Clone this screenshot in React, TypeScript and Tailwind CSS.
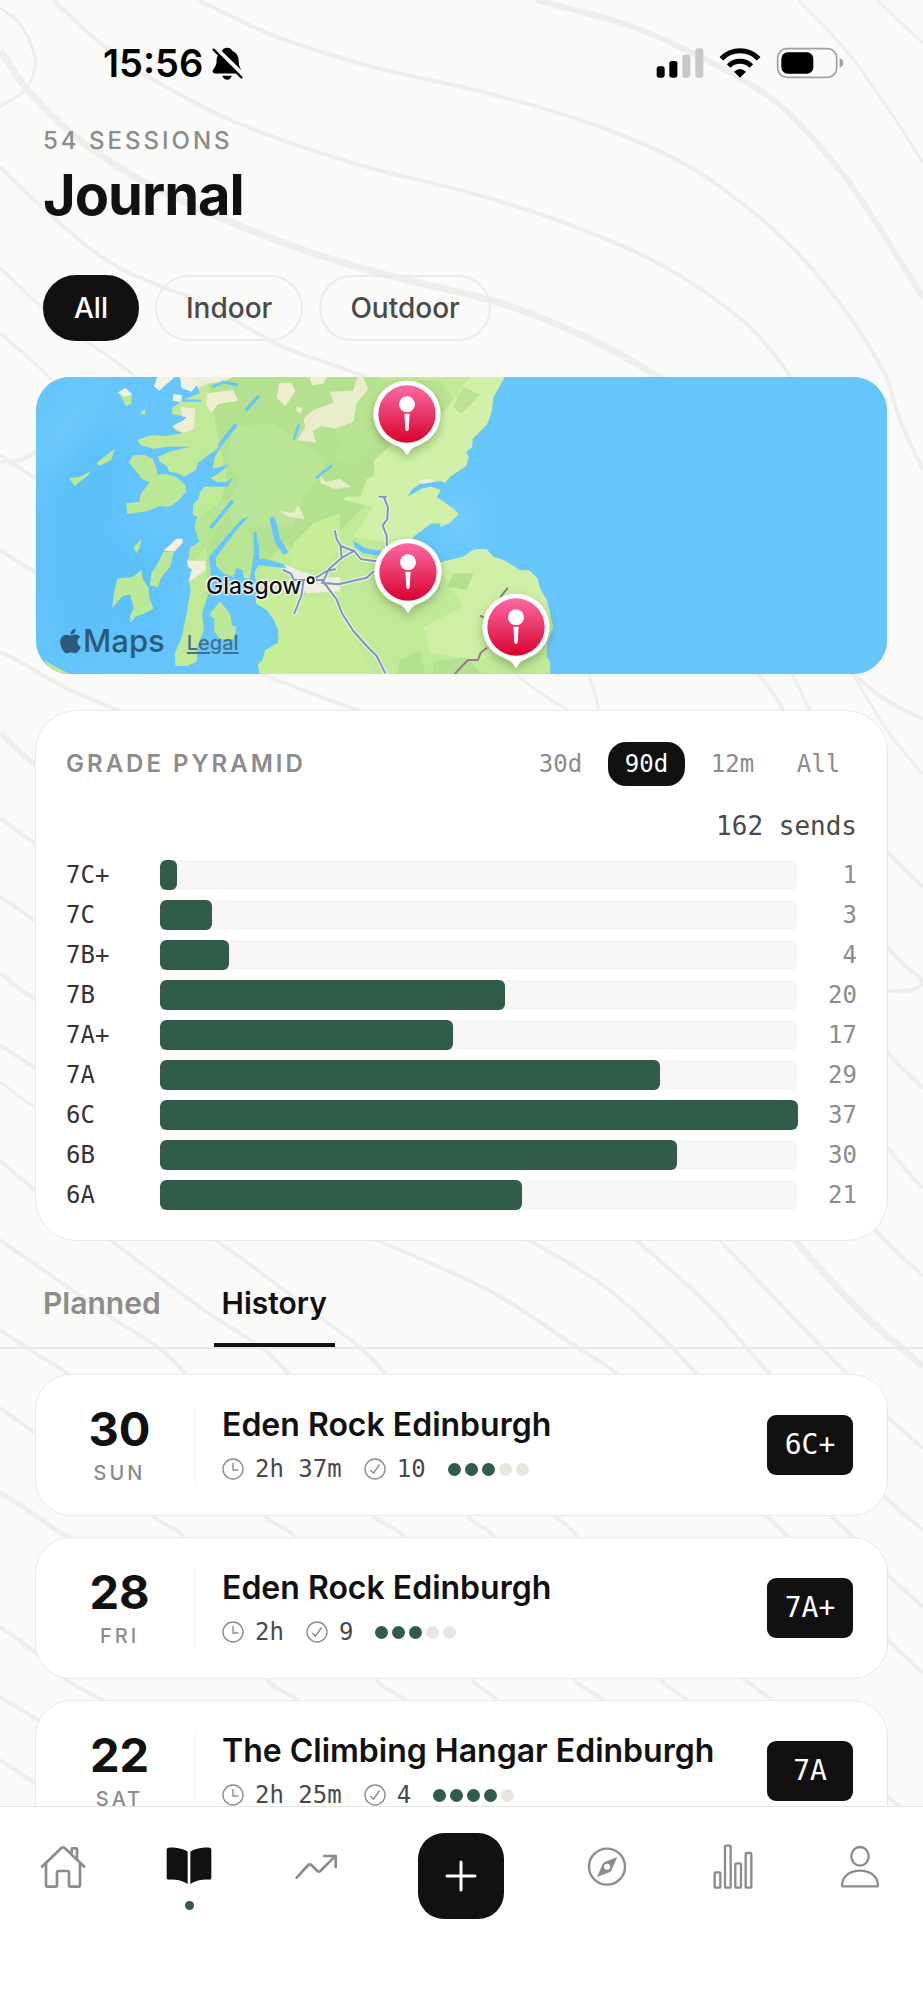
import React, { useState } from 'react';
import { FaApple } from 'react-icons/fa';
import clsx from 'clsx';

type Point = [number, number];

const grades = [
  { grade: '7C+', sends: 1 },
  { grade: '7C', sends: 3 },
  { grade: '7B+', sends: 4 },
  { grade: '7B', sends: 20 },
  { grade: '7A+', sends: 17 },
  { grade: '7A', sends: 29 },
  { grade: '6C', sends: 37 },
  { grade: '6B', sends: 30 },
  { grade: '6A', sends: 21 },
];

const sessions = [
  { day: '30', weekday: 'SUN', place: 'Eden Rock Edinburgh', duration: '2h 37m', sends: 10, effort: 3, top: '6C+' },
  { day: '28', weekday: 'FRI', place: 'Eden Rock Edinburgh', duration: '2h', sends: 9, effort: 3, top: '7A+' },
  { day: '22', weekday: 'SAT', place: 'The Climbing Hangar Edinburgh', duration: '2h 25m', sends: 4, effort: 4, top: '7A' },
];

const contours: { width: number; points: Point[] }[] = [
  { width: 3, points: [[0, 8], [20, 24], [33, 50], [35, 68], [25, 90], [0, 107]] },
  { width: 7, points: [[0, 50], [26, 88], [71, 133], [135, 177], [218, 217], [312, 253], [406, 280], [500, 303], [577, 333], [647, 370], [700, 410]] },
  { width: 4, points: [[53, 0], [100, 43], [159, 83], [235, 122], [353, 163], [471, 193], [565, 223], [665, 267], [742, 320], [786, 370], [800, 400]] },
  { width: 4, points: [[197, 0], [277, 37], [377, 68], [483, 92], [589, 123], [683, 163], [759, 217], [824, 283], [883, 370], [900, 420], [923, 470]] },
  { width: 6, points: [[536, 0], [636, 28], [706, 60], [777, 103], [842, 173], [895, 253], [923, 298]] },
  { width: 3, points: [[798, 0], [848, 53], [889, 110], [923, 163]] },
  { width: 3, points: [[877, 0], [900, 22], [923, 43]] },
  { width: 4, points: [[0, 167], [53, 217], [118, 267], [212, 307], [283, 347], [353, 372], [420, 400]] },
  { width: 3, points: [[0, 268], [53, 317], [130, 372], [160, 400]] },
  { width: 3, points: [[0, 333], [44, 372], [60, 390]] },
  { width: 4, points: [[0, 462], [20, 460], [40, 450]] },
  { width: 4, points: [[0, 455], [20, 468], [45, 485]] },
  { width: 4, points: [[0, 550], [20, 563], [45, 578]] },
  { width: 4, points: [[0, 652], [20, 662], [70, 690], [130, 715]] },
  { width: 4, points: [[240, 665], [321, 697], [370, 715]] },
  { width: 3, points: [[500, 660], [536, 690], [576, 715]] },
  { width: 3, points: [[585, 665], [594, 690], [600, 715]] },
  { width: 4, points: [[745, 660], [771, 690], [786, 715]] },
  { width: 3, points: [[785, 660], [800, 690], [812, 715]] },
  { width: 3, points: [[845, 660], [865, 695], [889, 733], [923, 775]] },
  { width: 4, points: [[850, 672], [886, 700], [923, 719]] },
  { width: 6, points: [[0, 733], [20, 752], [45, 772]] },
  { width: 4, points: [[0, 818], [20, 833], [45, 850]] },
  { width: 4, points: [[0, 897], [20, 910], [45, 928]] },
  { width: 4, points: [[0, 973], [20, 989], [45, 1006]] },
  { width: 4, points: [[0, 1045], [20, 1058], [45, 1075]] },
  { width: 3, points: [[0, 1082], [20, 1097], [45, 1115]] },
  { width: 4, points: [[0, 1160], [20, 1178], [45, 1198]] },
  { width: 4, points: [[880, 845], [905, 870], [923, 887]] },
  { width: 4, points: [[885, 945], [905, 966], [922, 982], [912, 990], [885, 991]] },
  { width: 4, points: [[880, 1045], [900, 1066], [923, 1088]] },
  { width: 4, points: [[880, 1138], [900, 1163], [923, 1188]] },
  { width: 4, points: [[0, 1240], [100, 1310], [182, 1370], [264, 1515], [295, 1537], [377, 1680], [405, 1700], [440, 1740]] },
  { width: 4, points: [[100, 1232], [194, 1303], [285, 1370], [373, 1515], [404, 1537], [473, 1680], [497, 1700], [530, 1740]] },
  { width: 4, points: [[205, 1232], [306, 1307], [382, 1370], [467, 1515], [494, 1537], [573, 1678], [603, 1700], [640, 1740]] },
  { width: 4, points: [[365, 1235], [488, 1290], [577, 1347], [617, 1374], [765, 1515], [788, 1537], [888, 1640], [923, 1673]] },
  { width: 4, points: [[515, 1232], [600, 1283], [665, 1340], [697, 1374], [830, 1515], [853, 1537], [888, 1575], [923, 1607]] },
  { width: 4, points: [[625, 1230], [706, 1303], [770, 1374], [885, 1497], [923, 1530]] },
  { width: 4, points: [[710, 1230], [783, 1307], [847, 1374], [888, 1417], [923, 1448]] },
  { width: 7, points: [[785, 1230], [859, 1310], [923, 1367]] },
  { width: 4, points: [[870, 1225], [895, 1250], [923, 1276]] },
  { width: 4, points: [[0, 1330], [35, 1353], [69, 1376], [153, 1515], [184, 1537], [267, 1680], [297, 1700], [340, 1740]] },
  { width: 4, points: [[530, 1500], [553, 1515], [578, 1537], [660, 1678], [687, 1700], [720, 1730]] },
  { width: 4, points: [[700, 1650], [742, 1678], [772, 1700], [888, 1797], [910, 1815]] },
  { width: 4, points: [[0, 1408], [20, 1422], [45, 1440]] },
  { width: 5, points: [[0, 1492], [35, 1515], [69, 1538], [90, 1550]] },
  { width: 4, points: [[0, 1627], [35, 1652], [67, 1680], [107, 1702]] },
  { width: 4, points: [[0, 1697], [20, 1709], [45, 1724]] },
  { width: 4, points: [[0, 1760], [20, 1773], [45, 1790]] },
];

// Smooth curve through the points. Handles are limited to the straight distance
// to the next point so that uneven spacing does not cause loops.
const toPath = (pts: Point[]) => {
  const handle = (a: Point, b: Point, reach: number) => {
    const dx = b[0] - a[0];
    const dy = b[1] - a[1];
    const len = Math.hypot(dx, dy) || 1;
    return [Math.round((dx / len) * reach), Math.round((dy / len) * reach)];
  };

  let d = `M${pts[0][0]} ${pts[0][1]}`;
  for (let i = 0; i < pts.length - 1; i++) {
    const p1 = pts[i];
    const p2 = pts[i + 1];
    const reach = Math.hypot(p2[0] - p1[0], p2[1] - p1[1]) / 3;
    const h1 = handle(pts[i - 1] || p1, p2, reach);
    const h2 = handle(p1, pts[i + 2] || p2, reach);
    d += `C${p1[0] + h1[0]} ${p1[1] + h1[1]} ${p2[0] - h2[0]} ${p2[1] - h2[1]} ${p2[0]} ${p2[1]}`;
  }
  return d;
};

const Contours = () => (
  <svg
    className="pointer-events-none absolute inset-0 h-full w-full"
    viewBox="0 0 923 2000"
    preserveAspectRatio="xMidYMin slice"
    fill="none"
    stroke="#eeeeec"
    aria-hidden="true"
  >
    {contours.map((line, i) => (
      <path key={i} d={toPath(line.points)} strokeWidth={line.width} />
    ))}
  </svg>
);

const StatusBar = () => (
  <div className="flex h-[126px] items-center justify-between pr-[79px] pl-[103px]">
    <div className="flex items-center gap-2 text-black">
      <span className="text-[38px] leading-[40px] font-semibold">15:56</span>
      <svg width="33" height="35" viewBox="366 46 98 106" aria-label="Silent mode">
        <path d="M414 51c9 0 14 4 16 10 14 6 19 18 19 31 0 18 8 23 8 30q0 7-8 7h-71q-8 0-8-7c1-7 12-14 12-30 0-13 5-25 16-31 2-6 7-10 16-10Z" />
        <path d="M399 136h29q-4 12-14 12t-15-12Z" />
        <path d="M376 52l90 88" stroke="#fafaf8" strokeWidth="17" />
        <path d="M373 57l84 84" stroke="#000" strokeWidth="7" strokeLinecap="round" />
      </svg>
    </div>
    <svg width="188" height="32" viewBox="44 48 564 96" aria-label="Signal, Wi-Fi and battery">
      <rect x="46" y="106" width="24" height="34" rx="7" />
      <rect x="84" y="90" width="24" height="50" rx="7" />
      <rect x="123" y="71" width="24" height="69" rx="7" fill="#c8c8c7" />
      <rect x="162" y="52" width="24" height="88" rx="7" fill="#c8c8c7" />
      <g fill="none" stroke="#000" strokeWidth="15">
        <path d="M240 83a78 78 0 0 1 112 0" />
        <path d="M262 105a48 48 0 0 1 68 0" />
      </g>
      <path d="M296 140l-18-18q18-16 36 0Z" />
      <rect x="409" y="53" width="177" height="86" rx="27" fill="none" stroke="#a0a0a0" strokeWidth="5" />
      <rect x="420" y="64" width="96" height="64" rx="19" />
      <path d="M595 82q11 4 11 14t-11 14Z" fill="#a0a0a0" />
    </svg>
  </div>
);

const FilterChips = () => {
  const [active, setActive] = useState('All');

  return (
    <div className="mt-12 flex gap-4 px-[43px]">
      {['All', 'Indoor', 'Outdoor'].map((name) => (
        <button
          key={name}
          type="button"
          onClick={() => setActive(name)}
          className={clsx(
            'h-[66px] rounded-full border-2 px-[29px] text-[28px] leading-8 font-medium',
            name === active ? 'border-[#111111] bg-[#111111] text-white' : 'border-[#ebebe9] text-[#4a4a4a]'
          )}
        >
          {name}
        </button>
      ))}
    </div>
  );
};

const Pin = ({ className, label }: { className: string; label: string }) => (
  <button type="button" aria-label={label} className={clsx('absolute', className)}>
    <svg width="68" height="80" viewBox="0 0 204 240" className="drop-shadow-[0_4px_5px_rgba(60,80,20,0.35)]">
      <defs>
        <linearGradient id="pin" x1="0" y1="0" x2="0" y2="1">
          <stop offset="0" stopColor="#fb6aa3" />
          <stop offset="1" stopColor="#d9022f" />
        </linearGradient>
      </defs>
      <path fill="#fff" d="M102 2a100 100 0 0 1 32 195c-16 6-22 12-28 24q-4 6-8 0c-6-12-12-18-28-24A100 100 0 0 1 102 2Z" />
      <circle cx="102" cy="102" r="86" fill="url(#pin)" />
      <circle cx="102" cy="73" r="24" fill="#fff" />
      <path fill="#fff" d="M94 101h16l-3 48q-5 8-10 0Z" />
    </svg>
  </button>
);

const coastline = [
  'M510 40L505 60L530 75L540 100L500 115L458 142L455 162L500 172L488 182L456 198L470 214L500 222L525 212',
  'L440 228L392 226L352 240L362 256L400 266L448 260L512 260L452 274L414 290L420 306L440 318L448 336L470 338L492 350L528 330L534 308L590 268L650 196',
  'L610 240L602 262L584 292L578 326L630 312L600 338L572 354L590 366L618 366L642 350L624 380L552 380L540 396L536 416L520 432L518 464L532 470L524 500L538 546L510 564L508 592',
  'L500 602L504 620L516 628L506 662L512 690L500 760L486 830L464 880L466 918L500 918L530 906L532 860L552 810L546 760L566 700L560 670L572 640L566 590',
  'L612 536L664 478L690 466L650 510L590 590L588 616L612 640L640 650L650 622L668 630L672 654L690 656L696 610L704 570L716 540L718 596L736 596L790 612L800 625',
  'L714 616L704 640L712 690L708 730L740 750L762 780L776 814L774 850L736 870L728 900L714 914L722 960',
  'L1592 960L1590 905L1580 890L1582 850L1600 800L1580 720L1562 690L1552 655L1530 632L1500 630L1450 600L1420 590L1400 568L1362 568L1330 590L1240 612L1150 596L1120 580L1100 574L1084 588L1030 580L1004 562L1000 542',
  'L1018 552L1034 564L1080 572L1176 560L1180 530L1210 508L1234 490L1260 490L1262 500L1290 488L1316 462L1300 446L1260 418L1250 412L1262 390L1232 380L1206 386L1162 410L1176 388L1200 372L1262 362L1275 368L1290 350L1338 318L1346 290L1338 276L1356 262L1358 236L1400 194L1414 160L1420 112L1438 80L1460 40Z',
].join('');

const roads = [
  'M945 513l5 25 12 20 2 30M962 558l40 15-36 20-40 35-18 40M1002 572l20 25 40 6 12 0M885 655l35-22 25-5M905 668l50 5 85-20 20-18M912 668l38 50 15 40 35 55 40 45 30 30 25 50M850 665l-5 40-22 55M790 630l22 10 10 20 90 0',
  'M1078 410h20M1092 412l12 30-2 35-14 20 12 30 2 60',
];

const SessionMap = () => (
  <section aria-label="Session map" className="relative mx-9 mt-9 h-[297px] overflow-hidden rounded-[34px] bg-[#66c6fb]">
    <svg className="h-full w-full" viewBox="48 51 2556 891" preserveAspectRatio="xMinYMin slice" aria-hidden="true">
      <defs>
        <filter id="haze" x="-50%" y="-50%" width="200%" height="200%">
          <feGaussianBlur stdDeviation="40" />
        </filter>
        <clipPath id="coast">
          <path d={coastline} />
        </clipPath>
      </defs>

      <rect x="48" y="51" width="2556" height="891" fill="#66c6fb" />
      <g filter="url(#haze)" opacity="0.3">
        <path fill="#49b5f5" d="M90 200l200 0 60 200-60 120 160 60-30 300-140-60-160 100-80-300Z" />
        <path fill="#86d3fb" d="M180 80l60 0-60 160-110 110-20-80Z" />
        <path fill="#90d8fb" d="M1300 380l80 20 0 160-140-20Z" />
      </g>

      <g clipPath="url(#coast)">
        <rect x="300" y="40" width="1320" height="920" fill="#c0e998" />
        <path fill="#b4e190" d="M560 51h520l60 60-60 90 50 120-100 120-60 60-100 90-80-40-60 70-80 20-90 120 0-200 60-200Z" />
        <path fill="#bbe596" d="M640 200l120-10 90 60 70 40-30 70-40 50-30 90-110 0-60 20-30-80 40-80-40-60Z" />
        <path fill="#b8e593" d="M490 500l90-60 60-30-60 120-80 100ZM580 580l100-100 30 120-50 60-80-30Z" />
        <path fill="#b8e492" d="M1080 60l180 0 40 60-70 70-80 100-90-30-60 60-80-40 60-120Z" />
        <path fill="#cff0a6" d="M1480 40H1360L1330 76L1240 200L1130 240L1062 300V345L1000 380L970 420L1060 440L1000 530L1180 560L1330 500L1460 300Z" />
        <path fill="#b4e18f" d="M1310 105l75-5-60 60ZM1300 140l30-60 40 20-50 60Z" opacity="0.8" />
        <path fill="#b4e18f" d="M900 340l80-20 60 40-20 50-110 0ZM880 200l50 0 40 60-50 40-60-40Z" />
        <path fill="#c7ee97" d="M820 550l60-60 80-30 0 110-60 60-90-10ZM700 700l240 20 130 240h-360Z" />
        <path fill="#ceefa5" d="M1240 600l160-40 200 80 20 100-130 130-120 30-140-20-20-80 120-60Z" />
        <path fill="#b3e18f" d="M1140 900l60-30 20 90h-90ZM1240 905l100-12 60 67h-160ZM1300 640l60 0-20 50-60-10Z" />
        <path fill="#efeed2" d="M560 100l80-10 14 32-60 10-20 26-14-20ZM778 68l36 0 12 26-30 44-26-24ZM830 140l18 4-6 18-14-10ZM510 51h130l-30 14-50 6-30 16-30 0ZM480 140l46 6-4 60-30 12-36-16 34-24ZM870 51h50l-10 20-34 4Z" />
        <path fill="#eaedcb" d="M930 95L1000 92L1012 51H1030L1044 88L1010 130L1000 185L945 206L905 198L878 212L888 248L832 240L856 200L850 176L880 150L940 128Z" />
        <path fill="#e6ecc6" d="M775 452l46 6 14-22 20 42-50-8ZM900 345l16 20 44-8 34 24-50 6-42-18Z" />
        <path fill="#f1eee0" d="M502 602l54 0 2 26-30 24-20 12 0-30ZM790 612l50 20 60 20 60 0 0 42-100 6-40-50ZM1196 362l34-6 20 12-40 6Z" />
        <g stroke="#66c6fb" strokeLinecap="round" fill="none">
          <path d="M575 500l60-74" strokeWidth="11" />
          <path d="M600 255l45-58" strokeWidth="12" />
          <path d="M680 148l34-38" strokeWidth="10" />
          <path d="M822 236l14-40" strokeWidth="8" />
          <path d="M890 352l44-34" strokeWidth="7" />
          <path d="M758 480l14 60 22 34" strokeWidth="18" />
          <path d="M706 520l0 90" strokeWidth="10" />
          <path d="M580 80l30-14 40 8" strokeWidth="9" />
          <path d="M480 122h60" strokeWidth="7" />
        </g>
      </g>

      {/* Mull, Islay, Jura, Arran and the small isles */}
      <g fill="#bbe896">
        <path d="M326 306L340 286L372 284L398 296L410 326L412 344L440 342L470 352L496 376L498 396L474 424L448 440L420 438L380 454L322 462L318 430L358 426L362 402L390 366L366 358L346 330Z" />
        <path d="M364 630L370 660L386 684L388 712L400 746L370 762L346 770L332 788L330 766L342 744L330 704L308 708L276 744L282 700L292 656L340 650Z" />
        <path d="M430 576L462 572L450 620L424 652L414 682L390 676L394 640L414 610Z" />
        <path d="M600 724L632 764L636 796L650 802L640 838L600 838L582 812L584 778L568 764Z" />
        <path d="M284 266L274 300L238 318L230 308ZM214 332L204 346L164 378L148 354L180 350ZM300 104L336 100L334 132L318 138ZM378 146L374 166L358 158ZM364 538L360 560L350 580L340 562ZM72 900L110 922L150 942H100Z" />
      </g>
      <path fill="#f2f0e2" d="M292 98l24-14 20 18-20 8ZM430 572l40-36 18 0 0 12-24 26ZM412 51h52l-30 26-16 16-16-14ZM480 51h50l4 20-20 24-30-12ZM460 102l26 4-2 20-26-4Z" />

      <g fill="none" strokeLinejoin="round" strokeLinecap="round">
        {roads.map((d) => (
          <path key={d} d={d} stroke="#e9f3df" strokeWidth="13" />
        ))}
        {roads.map((d) => (
          <path key={d} d={d} stroke="#8093bd" strokeWidth="6" />
        ))}
        <path d="M1462 685l-20 25M1382 768l20 8M1400 864l-18 14-8 22-30 0-40 42" stroke="#957c86" strokeWidth="6" />
      </g>
      <circle cx="872" cy="661" r="9" fill="#fff" stroke="#fff" strokeWidth="14" />
      <circle cx="872" cy="661" r="9" fill="#fff" stroke="#111" strokeWidth="6" />
    </svg>

    <span className="absolute top-[195px] left-[170px] text-[23px] leading-7 font-medium text-[#111111] [text-shadow:0_0_2px_#fff,0_0_2px_#fff,0_0_3px_#fff,1px_1px_1px_#fff,-1px_-1px_1px_#fff]">
      Glasgow
    </span>
    <Pin className="top-[3px] left-[337px]" label="Dundee, sessions" />
    <Pin className="top-[161px] left-[338px]" label="Edinburgh, sessions" />
    <Pin className="top-[216px] left-[446px]" label="Borders, sessions" />
    <div className="absolute bottom-[13px] left-[22px] flex items-center text-[#2c5a78]">
      <FaApple className="h-7 w-[25px]" />
      <span className="text-[31px] leading-10 font-medium">Maps</span>
      <a href="#legal" className="ml-[22px] pt-1 text-[20px] leading-6 font-medium text-[#3f7291] underline decoration-2 underline-offset-2">
        Legal
      </a>
    </div>
  </section>
);

const GradePyramid = () => {
  const [range, setRange] = useState('90d');
  const maxSends = Math.max(...grades.map((g) => g.sends));
  const total = grades.reduce((sum, g) => sum + g.sends, 0);

  return (
    <section className="mx-[35px] mt-9 rounded-[42px] border border-[#e9e9e7] bg-white px-[30px] pt-[31px] pb-[30px]">
      <div className="flex items-center justify-between">
        <h2 className="text-[24px] leading-8 font-semibold tracking-[3px] text-[#8c8c8c]">GRADE PYRAMID</h2>
        <div className="flex gap-[9px] font-['DejaVu_Sans_Mono',monospace]">
          {['30d', '90d', '12m', 'All'].map((name) => (
            <button
              key={name}
              type="button"
              onClick={() => setRange(name)}
              className={clsx(
                'h-11 w-[77px] rounded-[18px] text-[24px] leading-8',
                name === range ? 'bg-[#111111] text-white' : 'text-[#8c8c8c]'
              )}
            >
              {name}
            </button>
          ))}
        </div>
      </div>
      <p className="mt-6 text-right font-['DejaVu_Sans_Mono',monospace] text-[26px] leading-8 text-[#4a4a4a]">
        {total} sends
      </p>
      <div className="mt-[18px] flex flex-col gap-[10px] font-['DejaVu_Sans_Mono',monospace] text-[24px] leading-[30px]">
        {grades.map(({ grade, sends }) => (
          <div key={grade} className="flex items-center">
            <span className="w-[94px] text-[#333333]">{grade}</span>
            <div className="h-[30px] flex-1 overflow-hidden rounded-md bg-[#f6f6f6]">
              <div className="h-full rounded-md bg-[#305c49]" style={{ width: `${(sends / maxSends) * 100}%` }}></div>
            </div>
            <span className="w-[59px] text-right text-[#8c8c8c]">{sends}</span>
          </div>
        ))}
      </div>
    </section>
  );
};

const Tabs = () => {
  const [tab, setTab] = useState('History');

  return (
    <div role="tablist" className="mt-11 flex gap-[45px] border-b-2 border-[#e9e9e7] px-[35px]">
      {['Planned', 'History'].map((name) => (
        <button
          key={name}
          type="button"
          role="tab"
          aria-selected={name === tab}
          onClick={() => setTab(name)}
          className={clsx(
            'border-b-4 px-2 pb-[22px] text-[30px] leading-9 font-semibold',
            name === tab ? 'border-[#111111] text-[#111111]' : 'border-transparent text-[#8c8c8c]'
          )}
        >
          {name}
        </button>
      ))}
    </div>
  );
};

const SessionCard = ({ session }: { session: (typeof sessions)[number] }) => (
  <article className="flex items-center rounded-[36px] border border-[#e9e9e7] bg-white py-[30px] pr-[34px] pl-2">
    <div className="flex w-[151px] flex-col items-center gap-2">
      <span className="text-[47px] leading-[48px] font-bold text-[#111111]">{session.day}</span>
      <span className="text-[20px] leading-6 font-medium tracking-[3px] text-[#8c8c8c]">{session.weekday}</span>
    </div>
    <div className="h-20 w-px bg-[#f3f3f2]"></div>
    <div className="ml-[26px] flex min-w-0 flex-1 flex-col gap-2">
      <h3 className="truncate text-[32px] leading-10 font-semibold text-[#111111]">{session.place}</h3>
      <div className="flex items-center gap-[22px] font-['DejaVu_Sans_Mono',monospace] text-[24px] leading-8 text-[#4a4a4a]">
        <span className="flex items-center gap-[11px]">
          <svg width="22" height="22" viewBox="0 0 22 22" fill="none" stroke="#8c8c8c" aria-hidden="true">
            <circle cx="11" cy="11" r="10" strokeWidth="1.4" />
            <path d="M11 5v7h5.500" strokeWidth="1.4" />
          </svg>
          {session.duration}
        </span>
        <span className="flex items-center gap-[11px]">
          <svg width="22" height="22" viewBox="0 0 22 22" fill="none" stroke="#8c8c8c" aria-hidden="true">
            <circle cx="11" cy="11" r="10" strokeWidth="1.4" />
            <path d="M6.500 12l3 3.200L15.500 6.500" strokeWidth="1.4" />
          </svg>
          {session.sends}
        </span>
        <span className="flex gap-1" aria-label={`Effort ${session.effort} of 5`}>
          {[1, 2, 3, 4, 5].map((n) => (
            <span key={n} className={clsx('size-[13px] rounded-full', n <= session.effort ? 'bg-[#305c49]' : 'bg-[#e8e6df]')}></span>
          ))}
        </span>
      </div>
    </div>
    <span className="flex h-[60px] w-[86px] items-center justify-center rounded-[9px] bg-[#111111] font-['DejaVu_Sans_Mono',monospace] text-[28px] leading-8 text-white">
      {session.top}
    </span>
  </article>
);

const NavItem = ({ label, viewBox, active, children }: { label: string; viewBox: string; active?: boolean; children: React.ReactNode }) => (
  <a href={`#${label.toLowerCase()}`} aria-label={label} className="flex flex-1 flex-col items-center gap-[10px] pt-9">
    <svg
      width="48"
      height="48"
      viewBox={viewBox}
      fill="none"
      stroke="#8c8c8c"
      strokeWidth="8"
      strokeLinecap="round"
      strokeLinejoin="round"
    >
      {children}
    </svg>
    {active && <span className="size-[9px] rounded-full bg-[#305c49]"></span>}
  </a>
);

const BottomNav = () => (
  <nav className="relative flex h-[194px] shrink-0 items-start border-t border-[#e4e4e2] bg-white">
    <NavItem label="Home" viewBox="117 490 144 144">
      <path d="M126 561l58-56q5-4 10 0l59 56" />
      <path d="M138 552v63q0 6 6 6h21q6 0 6-6v-36q0-5 5-5h26q5 0 5 5v36q0 6 6 6h21q6 0 6-6v-63" />
      <path d="M215 521v-13q0-2 2-2h12q2 0 2 2v30" />
    </NavItem>
    <NavItem label="Journal" viewBox="497 490 144 144" active>
      <g fill="#111111" stroke="none">
        <path d="M565 516c-15-10-40-13-57-12q-6 0-6 6v84q0 6 6 6c22-1 42 3 57 13Z" />
        <path d="M573 516c15-10 40-13 57-12q6 0 6 6v84q0 6-6 6c-22-1-42 3-57 13Z" />
      </g>
    </NavItem>
    <NavItem label="Progress" viewBox="875 490 144 144">
      <path d="M889 594l35-38q4-4 9 0l18 18q4 4 9 0l44-44" />
      <path d="M972 529h34v33" />
    </NavItem>
    <div className="flex w-[165px] justify-center pt-[26px]">
      <button type="button" aria-label="Add session" className="flex size-[86px] items-center justify-center rounded-[26px] bg-[#111111]">
        <svg width="32" height="32" viewBox="0 0 96 96" stroke="#fff" strokeWidth="9" strokeLinecap="round">
          <path d="M48 6v84M6 48h84" />
        </svg>
      </button>
    </div>
    <NavItem label="Explore" viewBox="550 190 144 144">
      <circle cx="622" cy="261" r="54" strokeWidth="7" />
      <path d="M652 233l-17 38q-2 5-7 7l-35 13 16-37q2-5 7-7Z" fill="#8c8c8c" strokeWidth="1" />
      <circle cx="622" cy="261" r="9" fill="#fff" stroke="none" />
    </NavItem>
    <NavItem label="Stats" viewBox="927 190 144 144">
      <g strokeWidth="7">
        <rect x="944" y="278" width="17" height="46" rx="3" />
        <rect x="975" y="198" width="17" height="126" rx="3" />
        <rect x="1006" y="251" width="17" height="73" rx="3" />
        <rect x="1037" y="220" width="17" height="104" rx="3" />
      </g>
    </NavItem>
    <NavItem label="Profile" viewBox="1307 190 144 144">
      <g strokeWidth="7">
        <ellipse cx="1379" cy="230" rx="26" ry="28" />
        <path d="M1325 315c2-26 24-42 54-42s52 16 54 42q0 5-5 5h-98q-5 0-5-5Z" />
      </g>
    </NavItem>
  </nav>
);

const App = () => {
  return (
    <div className="relative flex h-screen flex-col overflow-hidden bg-[#fafaf8] font-['Inter',sans-serif] text-[#111111]">
      <Contours />
      <main className="relative min-h-0 flex-1 overflow-y-auto [scrollbar-width:none]">
        <StatusBar />
        <header className="px-[43px]">
          <p className="text-[24px] leading-[30px] font-medium tracking-[3px] text-[#8c8c8c]">54 SESSIONS</p>
          <h1 className="mt-[7px] text-[56px] leading-[64px] font-bold tracking-[-1px]">Journal</h1>
        </header>
        <FilterChips />
        <SessionMap />
        <GradePyramid />
        <Tabs />
        <div className="flex flex-col gap-[21px] px-[35px] pt-[25px] pb-9">
          {sessions.map((session) => (
            <SessionCard key={session.day} session={session} />
          ))}
        </div>
      </main>
      <BottomNav />
    </div>
  );
};

export default App;
